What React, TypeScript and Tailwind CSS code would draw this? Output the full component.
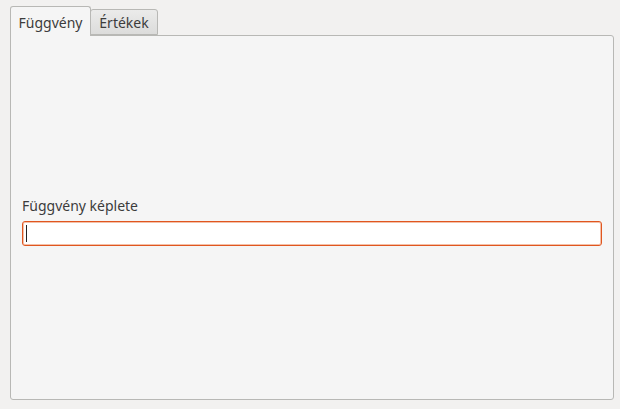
import React from "react";

export default function App() {
  return (
    <div
      className="w-[620px] h-[409px] bg-[#f2f1f0] pl-[10px] pr-[6px] pt-[6px] pb-[9px] flex flex-col text-[#3c3c3c]"
      style={{ fontFamily: '"Noto Sans", "Open Sans", sans-serif' }}
    >
      <div className="flex items-end h-[30px] relative z-10">
        <div className="h-[30px] w-[81px] border border-b-0 border-[#b8b8b5] rounded-t-[3px] bg-[#f5f5f5] flex items-center justify-center text-[14px] pt-[1px]">
          Függvény
        </div>
        <div className="h-[26px] w-[68px] -ml-px mb-px border border-[#b8b8b5] rounded-t-[3px] bg-gradient-to-b from-[#ebebea] to-[#dcdcdb] flex items-center justify-center text-[14px]">
          Értékek
        </div>
      </div>
      <div className="flex-1 -mt-px border border-[#b8b8b5] rounded-b-[3px] rounded-tr-[3px] bg-[#f5f5f5] pl-[11px] pr-[11px] pt-[160px] flex flex-col">
        <div className="text-[14px] leading-[20px] h-[20px]">Függvény képlete</div>
        <div className="mt-[5px] h-[25px] border border-[#e0561f] rounded-[3px] bg-white shadow-[inset_0_0_0_1px_#f4c0a8] flex items-center pl-[3px]">
          <div className="w-px h-[17px] bg-[#222]" />
        </div>
      </div>
    </div>
  );
}
